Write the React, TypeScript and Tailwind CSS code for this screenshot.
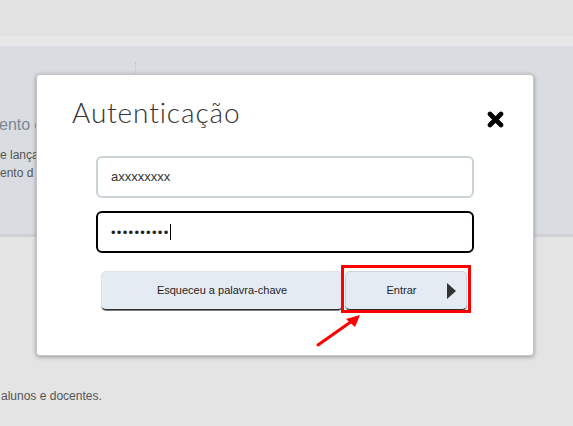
import React from "react";

export default function App() {
  return (
    <div className="relative w-[573px] h-[426px] overflow-hidden bg-[#e4e4e4] font-['Liberation_Sans',Arial,sans-serif]">
      {/* background page */}
      <div className="h-[36px] bg-[#e3e3e3]" />
      <div className="h-[10px] bg-[#e7e7e7]" />
      <div className="h-[188px] bg-[#d9dce0] flex">
        <div className="w-[135px] shrink-0 flex flex-col">
          <div className="mt-[70px] text-[16px] leading-[18px] text-[#7b8794] whitespace-nowrap -ml-[1px]">ento c</div>
          <div className="mt-[12px] text-[12px] leading-[18px] text-[#555] whitespace-nowrap">e lança</div>
          <div className="text-[12px] leading-[18px] text-[#555] whitespace-nowrap">ento d</div>
        </div>
        <div className="mt-[16px] h-[160px] border-l border-dotted border-[#bfc4ca]" />
      </div>
      <div className="h-[3px] bg-[#cfd1d4]" />
      <div className="pt-[151px] pl-[1px] text-[12px] leading-[16px] text-[#555]">alunos e docentes.</div>

      {/* modal */}
      <div className="absolute left-[36px] top-[74px] w-[498px] h-[282px] bg-white rounded-[4px] border border-[#c6c6c6] shadow-[0_1px_4px_rgba(0,0,0,0.35)] flex flex-col">
        <div className="flex justify-between items-start pl-[35px] pr-[29px] pt-[20px]">
          <div className="font-['Lato',sans-serif] font-light text-[28px] leading-[34px] text-[#333] tracking-[0.9px]">
            Autenticação
          </div>
          <svg width="17" height="17" viewBox="0 0 17 17" className="mt-[16px]">
            <path d="M3 3 L14 14 M14 3 L3 14" stroke="#000" strokeWidth="4.6" strokeLinecap="round" />
          </svg>
        </div>
        <div className="flex flex-col px-[59px] mt-[27px]">
          <div className="h-[42px] rounded-[6px] border-2 border-[#c9d3d5] flex items-center pl-[13px] text-[13px] text-[#333]">
            axxxxxxxx
          </div>
          <div className="mt-[13px] h-[42px] rounded-[6px] border-2 border-black flex items-center pl-[13px] text-[13px] text-[#222]">
            <span className="tracking-[1.3px] leading-none">••••••••••</span>
            <span className="w-[1px] h-[16px] bg-black" />
          </div>
          <div className="mt-[18px] flex gap-[2px] px-[5px]">
            <div className="w-[242px] h-[39px] rounded-[5px] bg-[#e5ebf3] border border-[#dfe4ea] border-b-[#2b2b2b] shadow-[0_1px_0_rgba(0,0,0,0.5)] flex items-center justify-center text-[11px] text-[#1e1e1e]">
              Esqueceu a palavra-chave
            </div>
            <div className="w-[122px] h-[39px] rounded-[5px] bg-[#e5ebf3] border border-[#cdd3da] border-b-[#2b2b2b] shadow-[0_1px_0_rgba(0,0,0,0.5)] flex items-center pl-[10px] pr-[10px] text-[11px] text-[#1e1e1e]">
              <span className="flex-1 text-center">Entrar</span>
              <svg width="9" height="16" viewBox="0 0 9 16">
                <path d="M0 0 L9 8 L0 16 Z" fill="#333" />
              </svg>
            </div>
          </div>
        </div>
      </div>

      {/* annotations */}
      <div className="absolute left-[341px] top-[265px] w-[130px] h-[48px] border-[3px] border-[#ff0000]" />
      <svg className="absolute left-0 top-0" width="573" height="426" viewBox="0 0 573 426">
        <line x1="318" y1="345" x2="352" y2="321" stroke="#ff0000" strokeWidth="3" strokeLinecap="round" />
        <path d="M360 315 L346 319 L355 327 Z" fill="#ff0000" />
      </svg>
    </div>
  );
}
